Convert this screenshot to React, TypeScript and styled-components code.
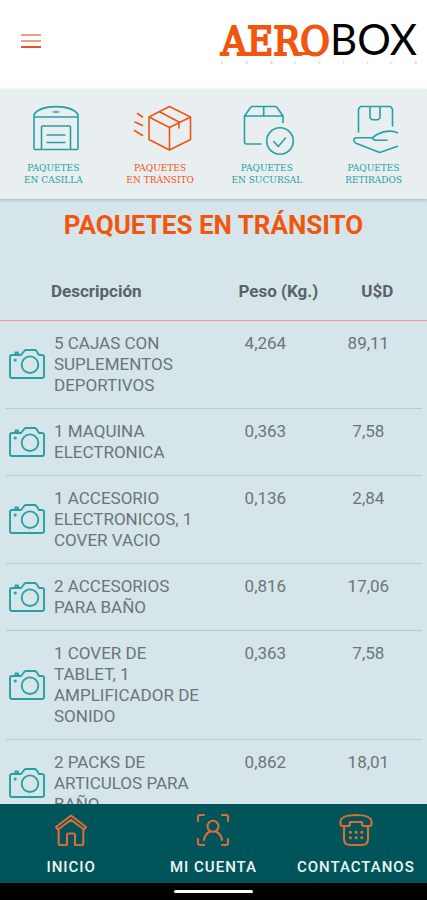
import React from "react";
import styled, { createGlobalStyle } from "styled-components";

const c = {
  orange: "#f0560f",
  teal: "#26a0a6",
  tealDark: "#00555a",
  page: "#d6e5e9",
  tabs: "#e9eef0",
  text: "#6b7578",
  heading: "#5a6366",
  rule: "#b9c9ce",
};

const GlobalStyle = createGlobalStyle`
  *, *::before, *::after { box-sizing: border-box; }
  body { margin: 0; background: ${c.page}; font-family: Roboto, sans-serif; }
  button { font: inherit; color: inherit; background: none; border: 0; padding: 0; cursor: pointer; }
  svg { display: block; flex: none; }
`;

const Screen = styled.div`
  display: flex;
  flex-direction: column;
  height: 100vh;
  background: ${c.page};
`;

const Header = styled.header`
  display: flex;
  align-items: flex-start;
  justify-content: space-between;
  flex: none;
  height: 89px;
  padding: 17px 10px 0 7px;
  background: #fff;
`;

const MenuButton = styled.button`
  display: grid;
  place-items: center;
  width: 48px;
  height: 48px;
`;

const Logo = styled.div`
  position: relative;
  display: flex;
  flex-direction: column;
  width: 196px;
`;

const LogoWord = styled.div`
  display: flex;
  justify-content: space-between;
  align-items: baseline;
  line-height: 44px;
`;

const LogoAero = styled.span`
  font-family: "DejaVu Serif Condensed", "DejaVu Serif", serif;
  font-size: 40px;
  color: ${c.orange};
  -webkit-text-stroke: 2px ${c.orange};
`;

const LogoBox = styled.span`
  font-family: Lato, sans-serif;
  font-size: 42px;
  color: #000;
`;

const LogoLigature = styled.svg`
  position: absolute;
  left: 0;
  top: 0;
`;

const LogoTag = styled.div`
  display: flex;
  justify-content: space-between;
  font-size: 4px;
  line-height: 4px;
  margin-top: -2px;
  color: #aab0b2;
`;

const Tabs = styled.nav`
  display: grid;
  grid-template-columns: repeat(4, 1fr);
  flex: none;
  height: 110px;
  padding-top: 13px;
  background: ${c.tabs};
  box-shadow: 0 1px 3px rgba(60, 90, 90, 0.35);
  z-index: 1;
`;

const Tab = styled.button<{ $active?: boolean }>`
  display: flex;
  flex-direction: column;
  align-items: center;
  gap: 6px;
  color: ${(p) => (p.$active ? c.orange : c.teal)};
`;

const TabLabel = styled.span`
  font-family: "DejaVu Serif", serif;
  font-size: 9px;
  line-height: 12px;
  text-align: center;
  white-space: pre;
`;

const Content = styled.main`
  flex: 1;
  min-height: 0;
  overflow-y: auto;
  scrollbar-width: none;
`;

const Title = styled.h1`
  margin: 0;
  padding-top: 10px;
  font-size: 26px;
  line-height: 32px;
  font-weight: 700;
  text-align: center;
  color: ${c.orange};
`;

const Table = styled.table`
  width: 100%;
  margin-top: 21px;
  border-collapse: separate;
  border-spacing: 0;
  table-layout: fixed;
  font-size: 17px;
  line-height: 21px;
  color: ${c.text};
`;

const PhotoCol = styled.col`
  width: 54px;
`;

const NameCol = styled.col`
  width: 37%;
`;

const WeightCol = styled.col`
  width: 25%;
`;

const HeadRow = styled.tr`
  height: 59px;
`;

const HeadCell = styled.th<{ $kind: "name" | "weight" | "usd" }>`
  padding: ${(p) => ({ name: "0 0 0 51px", weight: "0 0 0 26px", usd: "0 9px 0 18px" })[p.$kind]};
  border-bottom: 1px solid #ec9d99;
  font-weight: 700;
  text-align: ${(p) => (p.$kind === "name" ? "left" : "center")};
  color: ${c.heading};
`;

const Row = styled.tr`
  background: linear-gradient(${c.rule}, ${c.rule}) 6px 100% / calc(100% - 11px) 1px no-repeat;
`;

const Cell = styled.td<{ $kind: "name" | "weight" | "usd" }>`
  padding: 12px ${(p) => (p.$kind === "usd" ? 9 : 0)}px 13px 0;
  vertical-align: top;
  text-align: ${(p) => (p.$kind === "name" ? "left" : "center")};
`;

const PhotoCell = styled.td`
  padding: 0 0 2px 9px;
  vertical-align: middle;
  color: ${c.teal};
`;

const BottomNav = styled.nav`
  display: grid;
  grid-template-columns: repeat(3, 1fr);
  flex: none;
  height: 79px;
  padding-top: 9px;
  background: ${c.tealDark};
`;

const NavItem = styled.button`
  display: flex;
  flex-direction: column;
  align-items: center;
  gap: 11px;
  color: #dd6b38;
`;

const NavLabel = styled.span`
  font-size: 15px;
  line-height: 18px;
  font-weight: 500;
  letter-spacing: 1px;
  white-space: nowrap;
  color: #eef5f5;
`;

const SystemBar = styled.div`
  display: grid;
  place-items: center;
  flex: none;
  height: 17px;
  background: #000;
`;

const GestureHandle = styled.div`
  width: 79px;
  height: 3px;
  border-radius: 2px;
  background: #fff;
`;

const line = {
  fill: "none",
  stroke: "currentColor",
  strokeLinecap: "round" as const,
  strokeLinejoin: "round" as const,
};

const tabIcon = { ...line, width: 72, height: 54, viewBox: "0 0 72 54", strokeWidth: 1.6, "aria-hidden": true };

const WarehouseIcon = () => (
  <svg {...tabIcon}>
    <path d="M17 15H61V46.5Q61 47.5 60 47.5H18Q17 47.5 17 46.5V12.5C24 2 54 2 61 12.5V15" />
    <path d="M36.5 10H41.5M24.5 47.5V25Q24.5 24 25.5 24H52.5Q53.5 24 53.5 25V47.5M30 33H48M30 40.5H48" />
  </svg>
);

const TransitIcon = () => (
  <svg {...tabIcon}>
    <path d="M45.5 4.5L66.5 15V37.5L45.5 48L25 37.5V15ZM25 15L45.5 25.5L66.5 15M45.5 25.5V48" />
    <path d="M36 10L55 20V26M13.5 11.5L18.5 15M11 20L18.5 23.5M10.5 28.5L18.5 33.5" />
  </svg>
);

const BranchIcon = () => (
  <svg {...tabIcon}>
    <path d="M30 42H15.5Q13.5 42 13.5 40V14L19.5 5.5Q20.3 4.5 21.5 4.5H44Q45.2 4.5 46 5.5L52 14V20.5M13.5 14H52M32.7 4.5V14" />
    <circle cx="49" cy="39" r="13.3" />
    <path d="M42.7 39.5L47.3 44.5L54.5 36" />
  </svg>
);

const HandoverIcon = () => (
  <svg {...tabIcon}>
    <path d="M20.5 30V7L22.5 4.5H52.5L54.5 7V24M32 4.5V16L34 17.7H40L42 16V4.5" />
    <path d="M59.5 30.7C53 28 46 29 39 32.5L34.5 35.7H18.5C15 36 15 39.5 18 41.3L41.7 50.5L59.5 44.3M34.5 35.7Q35 38.3 38 38.3H49" />
  </svg>
);

const CameraIcon = () => (
  <svg {...line} width="36" height="30" viewBox="0 0 36 30" strokeWidth="1.9" role="img" aria-label="Ver foto">
    <path d="M3 6H12L15.2 2Q16 1 17.2 1H25.5Q26.7 1 27.5 2L30 6H33Q35 6 35 8V27Q35 29 33 29H3Q1 29 1 27V8Q1 6 3 6ZM6.5 5V3.5H9V5" />
    <circle cx="21" cy="15.7" r="8.3" />
    <circle cx="6.2" cy="11" r="0.6" />
  </svg>
);

const navIcon = { ...line, width: 34, height: 34, viewBox: "0 0 34 34", strokeWidth: 2.1, "aria-hidden": true };

const HomeIcon = () => (
  <svg {...navIcon}>
    <path d="M2 14L17 2.5L32 14L30 16.5L17 6.8L4 16.5Z" />
    <path d="M4.7 17V31Q4.7 32 5.7 32H13V22Q13 20.5 14.5 20.5H19.5Q21 20.5 21 22V32H28.3Q29.3 32 29.3 31V17" />
  </svg>
);

const AccountIcon = () => (
  <svg {...navIcon}>
    <path d="M2 8V4Q2 2 4 2H8M26 2H30Q32 2 32 4V8M32 26V30Q32 32 30 32H26M8 32H4Q2 32 2 30V26" />
    <circle cx="17" cy="13.3" r="5.5" />
    <path d="M8 27Q9 21 14 18.5M26 27Q25 21 20 18.5" />
  </svg>
);

const PhoneIcon = () => (
  <svg {...navIcon}>
    <path d="M1.5 9C1.5 4 8 2 17 2S32.5 4 32.5 9V11Q32.5 13 30.5 13H25Q23 13 23 11V9H11V11Q11 13 9 13H3.5Q1.5 13 1.5 11Z" />
    <path d="M5 13V26Q5 32 11 32H23Q29 32 29 26V13" />
    <path d="M11.3 19.3H11.5M17 19.3H17.2M22.7 19.3H22.9M11.3 24.7H11.5M17 24.7H17.2M22.7 24.7H22.9" strokeWidth="3" />
  </svg>
);

const tabs = [
  { label: "PAQUETES\nEN CASILLA", Icon: WarehouseIcon },
  { label: "PAQUETES\nEN TRÁNSITO", Icon: TransitIcon, active: true },
  { label: "PAQUETES\nEN SUCURSAL", Icon: BranchIcon },
  { label: "PAQUETES\nRETIRADOS", Icon: HandoverIcon },
];

const packages = [
  { name: "5 CAJAS CON SUPLEMENTOS DEPORTIVOS", weight: "4,264", usd: "89,11" },
  { name: "1 MAQUINA ELECTRONICA", weight: "0,363", usd: "7,58" },
  { name: "1 ACCESORIO ELECTRONICOS, 1 COVER VACIO", weight: "0,136", usd: "2,84" },
  { name: "2 ACCESORIOS PARA BAÑO", weight: "0,816", usd: "17,06" },
  { name: "1 COVER DE TABLET, 1 AMPLIFICADOR DE SONIDO", weight: "0,363", usd: "7,58" },
  { name: "2 PACKS DE ARTICULOS PARA BAÑO", weight: "0,862", usd: "18,01" },
];

const navItems = [
  { label: "INICIO", Icon: HomeIcon },
  { label: "MI CUENTA", Icon: AccountIcon },
  { label: "CONTACTANOS", Icon: PhoneIcon },
];

export default function App() {
  return (
    <Screen>
      <GlobalStyle />
      <Header>
        <MenuButton aria-label="Menú">
          <svg width="20" height="16" viewBox="0 0 20 16" strokeWidth="2" aria-hidden="true">
            <path d="M0 2H20M0 8H20" stroke="#ec9e88" />
            <path d="M0 14H20" stroke="#e4512d" />
          </svg>
        </MenuButton>
        <Logo>
          <LogoWord>
            <LogoAero>AERO</LogoAero>
            <LogoBox>BOX</LogoBox>
          </LogoWord>
          <LogoLigature width="110" height="44" viewBox="0 0 110 44" aria-hidden="true">
            <path d="M22 36.5H48M72 36.5H94" stroke={c.orange} strokeWidth="3" />
          </LogoLigature>
          <LogoTag aria-label="LOGISTICS">
            {"LOGISTICS".split("").map((ch, i) => (
              <span key={i}>{ch}</span>
            ))}
          </LogoTag>
        </Logo>
      </Header>
      <Tabs>
        {tabs.map(({ label, Icon, active }) => (
          <Tab key={label} $active={active} aria-current={active ? "page" : undefined}>
            <Icon />
            <TabLabel>{label}</TabLabel>
          </Tab>
        ))}
      </Tabs>
      <Content>
        <Title>PAQUETES EN TRÁNSITO</Title>
        <Table>
          <colgroup>
            <PhotoCol />
            <NameCol />
            <WeightCol />
            <col />
          </colgroup>
          <thead>
            <HeadRow>
              <HeadCell colSpan={2} $kind="name">Descripción</HeadCell>
              <HeadCell $kind="weight">Peso (Kg.)</HeadCell>
              <HeadCell $kind="usd">U$D</HeadCell>
            </HeadRow>
          </thead>
          <tbody>
            {packages.map((p) => (
              <Row key={p.name}>
                <PhotoCell><CameraIcon /></PhotoCell>
                <Cell $kind="name">{p.name}</Cell>
                <Cell $kind="weight">{p.weight}</Cell>
                <Cell $kind="usd">{p.usd}</Cell>
              </Row>
            ))}
          </tbody>
        </Table>
      </Content>
      <BottomNav>
        {navItems.map(({ label, Icon }) => (
          <NavItem key={label}>
            <Icon />
            <NavLabel>{label}</NavLabel>
          </NavItem>
        ))}
      </BottomNav>
      <SystemBar>
        <GestureHandle />
      </SystemBar>
    </Screen>
  );
}
